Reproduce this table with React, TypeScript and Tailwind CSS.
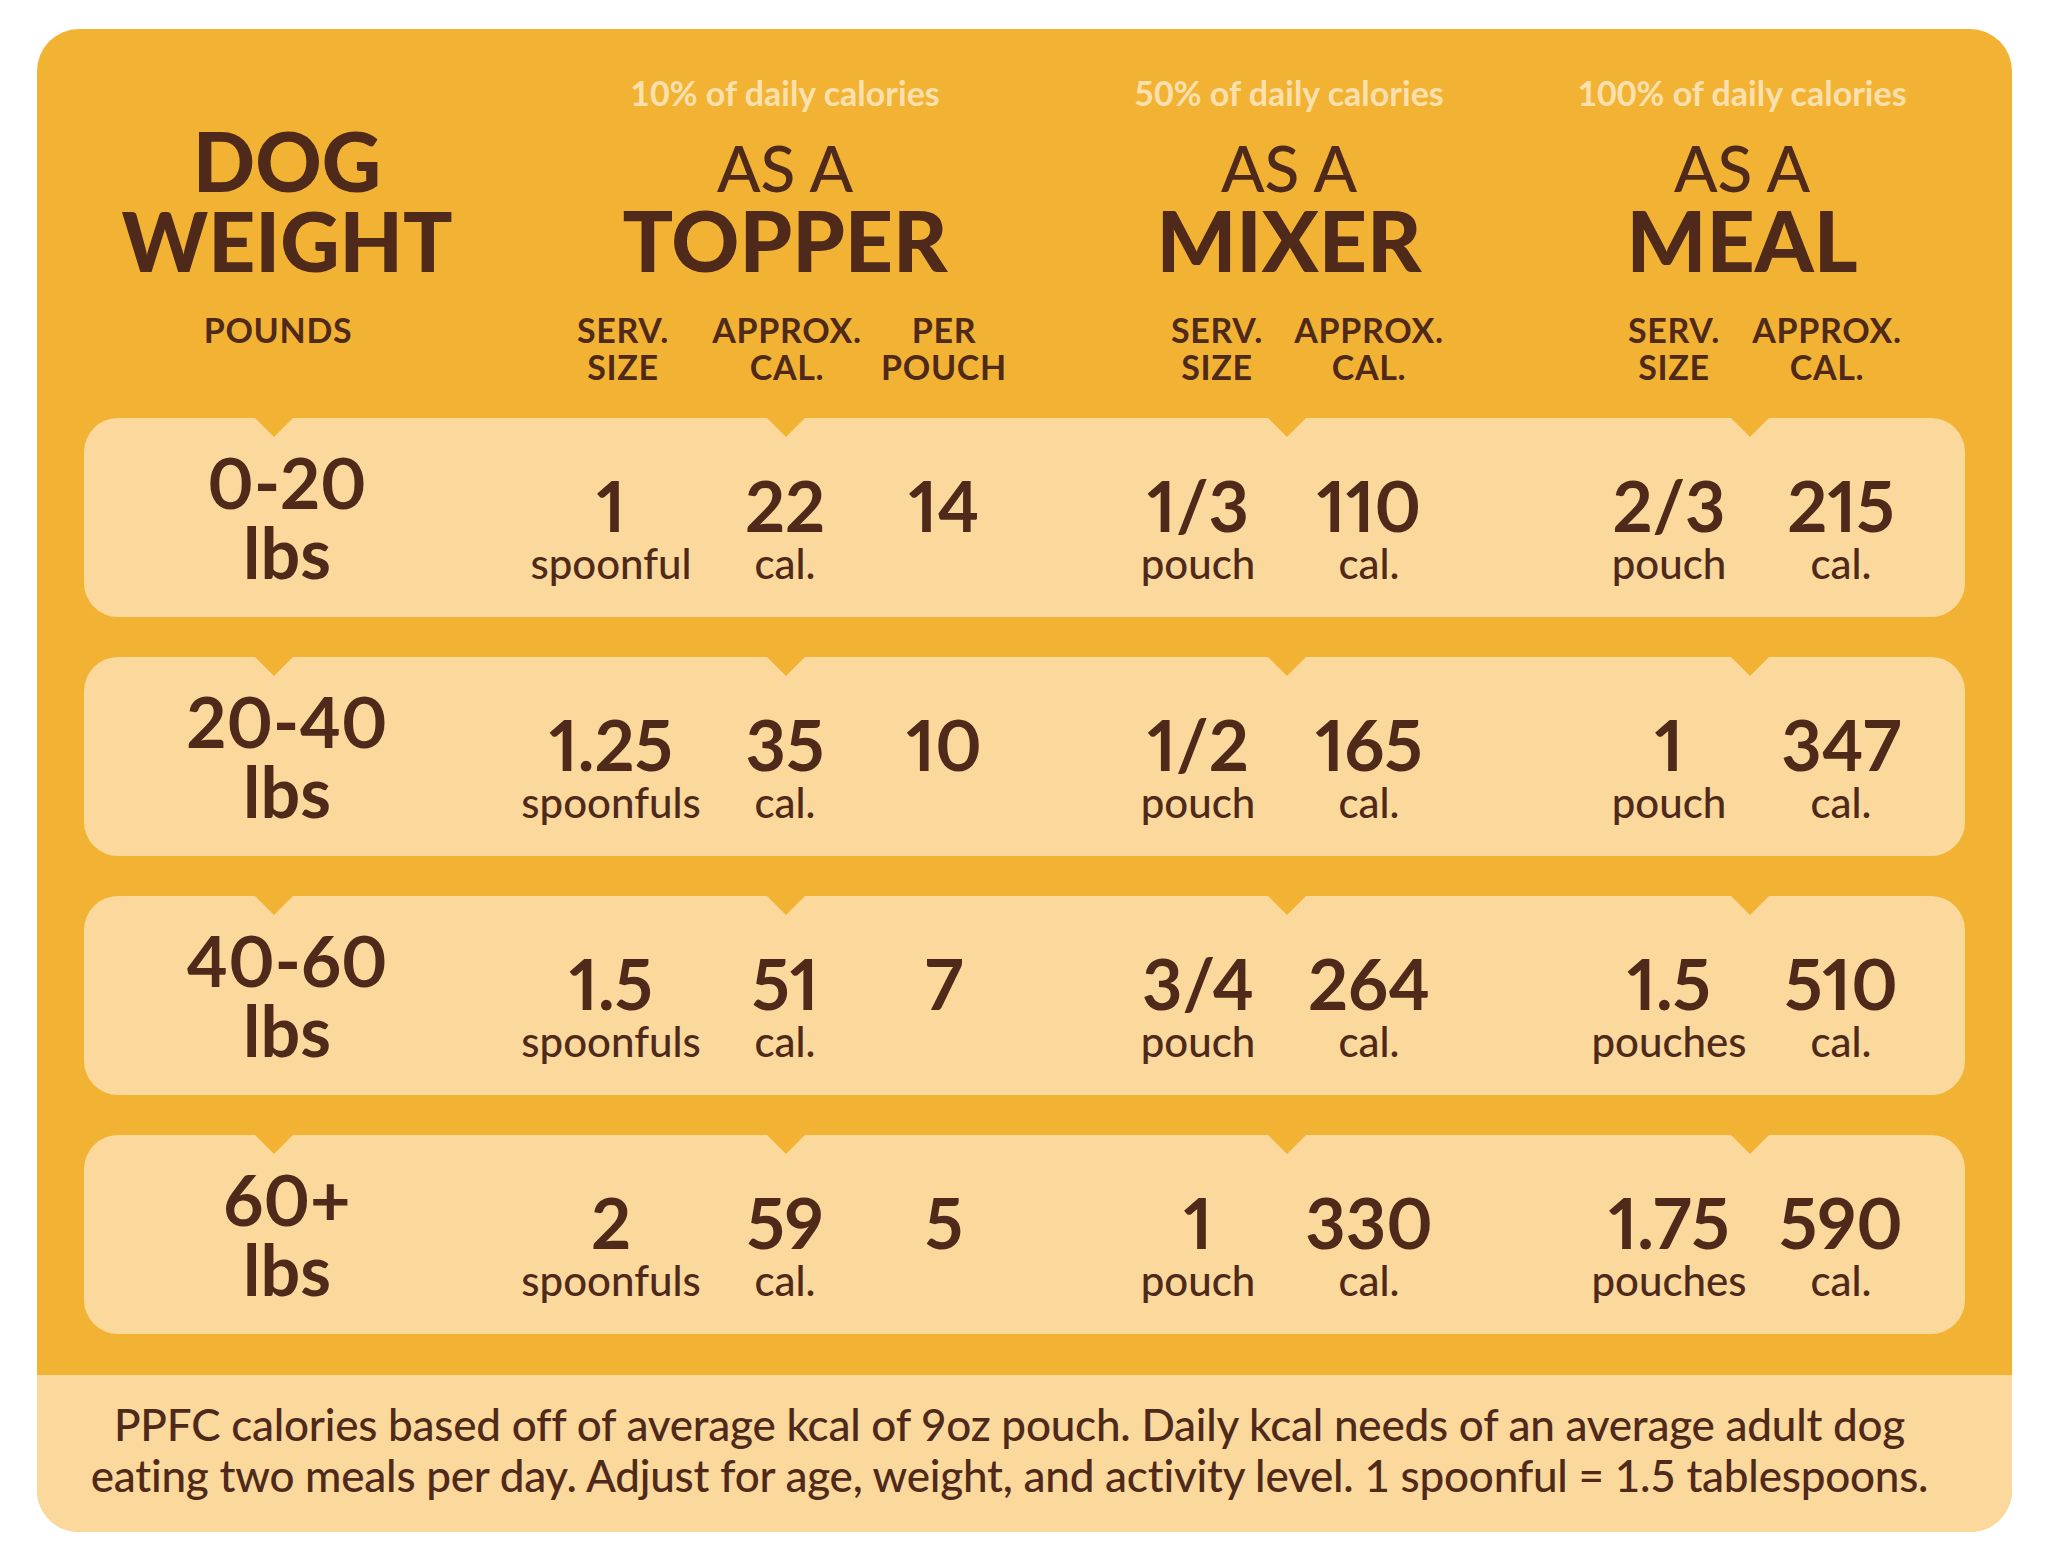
import React from "react";

type Row = {
  weight: string;
  topServ: string;
  topUnit: string;
  topCal: string;
  perPouch: string;
  mixServ: string;
  mixUnit: string;
  mixCal: string;
  mealServ: string;
  mealUnit: string;
  mealCal: string;
};

const rows: Row[] = [
  { weight: "0-20", topServ: "1", topUnit: "spoonful", topCal: "22", perPouch: "14", mixServ: "1/3", mixUnit: "pouch", mixCal: "110", mealServ: "2/3", mealUnit: "pouch", mealCal: "215" },
  { weight: "20-40", topServ: "1.25", topUnit: "spoonfuls", topCal: "35", perPouch: "10", mixServ: "1/2", mixUnit: "pouch", mixCal: "165", mealServ: "1", mealUnit: "pouch", mealCal: "347" },
  { weight: "40-60", topServ: "1.5", topUnit: "spoonfuls", topCal: "51", perPouch: "7", mixServ: "3/4", mixUnit: "pouch", mixCal: "264", mealServ: "1.5", mealUnit: "pouches", mealCal: "510" },
  { weight: "60+", topServ: "2", topUnit: "spoonfuls", topCal: "59", perPouch: "5", mixServ: "1", mixUnit: "pouch", mixCal: "330", mealServ: "1.75", mealUnit: "pouches", mealCal: "590" },
];

function GroupTitle({ pct, name, className }: { pct: string; name: string; className: string }) {
  return (
    <div className={`flex flex-col items-center ${className}`}>
      <p className="text-[34px] leading-[36px] font-bold text-[#FCE0AE]">{pct}</p>
      <p className="mt-[25px] text-[64px] leading-[64px] font-medium">AS A</p>
      <p className="text-[84px] leading-[80px] font-black">{name}</p>
    </div>
  );
}

function SubLabel({ top, bottom, className }: { top: string; bottom?: string; className: string }) {
  return (
    <div className={`flex flex-col items-center text-[34px] leading-[37px] font-bold tracking-[0.02em] ${className}`}>
      <span>{top}</span>
      {bottom && <span>{bottom}</span>}
    </div>
  );
}

function DataCell({ value, unit, className }: { value: string; unit?: string; className: string }) {
  return (
    <div className={`flex flex-col items-center mt-[57px] ${className}`}>
      <span className="text-[70px] leading-[60px] font-bold whitespace-nowrap proportional-nums">{value}</span>
      {unit && <span className="text-[42px] leading-[56px] font-medium whitespace-nowrap">{unit}</span>}
    </div>
  );
}

function Notch({ className }: { className: string }) {
  return (
    <span
      className={`absolute top-0 h-0 w-0 border-l-[19px] border-r-[19px] border-t-[19px] border-l-transparent border-r-transparent border-t-[#F2B334] ${className}`}
    />
  );
}

export default function App() {
  return (
    <div className="min-h-screen bg-white pt-[29px] pl-[37px] [font-family:Lato,sans-serif] text-[#4F2A1B]">
      <div className="w-[1975px] h-[1503px] rounded-[42px] overflow-hidden bg-[#F2B334] flex flex-col">
        {/* HEADER */}
        <div className="px-[47px] pt-[46px]">
          <div className="flex items-end">
            <div className="w-[406px] flex flex-col items-center">
              <p className="text-[82px] leading-[80px] font-black text-center">
                DOG
                <br />
                WEIGHT
              </p>
            </div>
            <GroupTitle pct="10% of daily calories" name="TOPPER" className="ml-[95px] w-[400px]" />
            <GroupTitle pct="50% of daily calories" name="MIXER" className="ml-[104px] w-[400px]" />
            <GroupTitle pct="100% of daily calories" name="MEAL" className="ml-[53px] w-[400px]" />
          </div>

          <div className="mt-[31px] flex items-start">
            <SubLabel top="POUNDS" className="ml-[44px] w-[300px]" />
            <SubLabel top="SERV." bottom="SIZE" className="ml-[120px] w-[150px]" />
            <SubLabel top="APPROX." bottom="CAL." className="ml-[9px] w-[160px]" />
            <SubLabel top="PER" bottom="POUCH" className="ml-[7px] w-[140px]" />
            <SubLabel top="SERV." bottom="SIZE" className="ml-[128px] w-[150px]" />
            <SubLabel top="APPROX." bottom="CAL." className="ml-[2px] w-[150px]" />
            <SubLabel top="SERV." bottom="SIZE" className="ml-[155px] w-[150px]" />
            <SubLabel top="APPROX." bottom="CAL." className="ml-[3px] w-[150px]" />
          </div>
        </div>

        {/* ROWS */}
        <div className="mt-[33px] px-[47px] flex flex-col gap-[40px]">
          {rows.map((r) => (
            <div key={r.weight} className="relative h-[199px] rounded-[34px] bg-[#FBD89B] flex items-start">
              <Notch className="left-[171px]" />
              <Notch className="left-[683px]" />
              <Notch className="left-[1184px]" />
              <Notch className="left-[1647px]" />

              <div className="ml-[53px] w-[300px] mt-[29px] flex flex-col items-center text-[70px] leading-[70px] font-bold proportional-nums">
                <span>{r.weight}</span>
                <span>lbs</span>
              </div>
              <DataCell value={r.topServ} unit={r.topUnit} className="ml-[89px] w-[170px]" />
              <DataCell value={r.topCal} unit="cal." className="ml-[9px] w-[160px]" />
              <DataCell value={r.perPouch} className="ml-[9px] w-[140px]" />
              <DataCell value={r.mixServ} unit={r.mixUnit} className="ml-[99px] w-[170px]" />
              <DataCell value={r.mixCal} unit="cal." className="ml-[6px] w-[160px]" />
              <DataCell value={r.mealServ} unit={r.mealUnit} className="ml-[135px] w-[170px]" />
              <DataCell value={r.mealCal} unit="cal." className="ml-[7px] w-[160px]" />
            </div>
          ))}
        </div>

        {/* FOOTER */}
        <div className="mt-auto h-[157px] bg-[#FBD89B] flex items-center justify-center pr-[30px] pb-[8px]">
          <p className="text-center text-[44px] leading-[51px] font-medium whitespace-nowrap tracking-[-0.005em]">
            PPFC calories based off of average kcal of 9oz pouch. Daily kcal needs of an average adult dog
            <br />
            eating two meals per day. Adjust for age, weight, and activity level. 1 spoonful = 1.5 tablespoons.
          </p>
        </div>
      </div>
    </div>
  );
}
